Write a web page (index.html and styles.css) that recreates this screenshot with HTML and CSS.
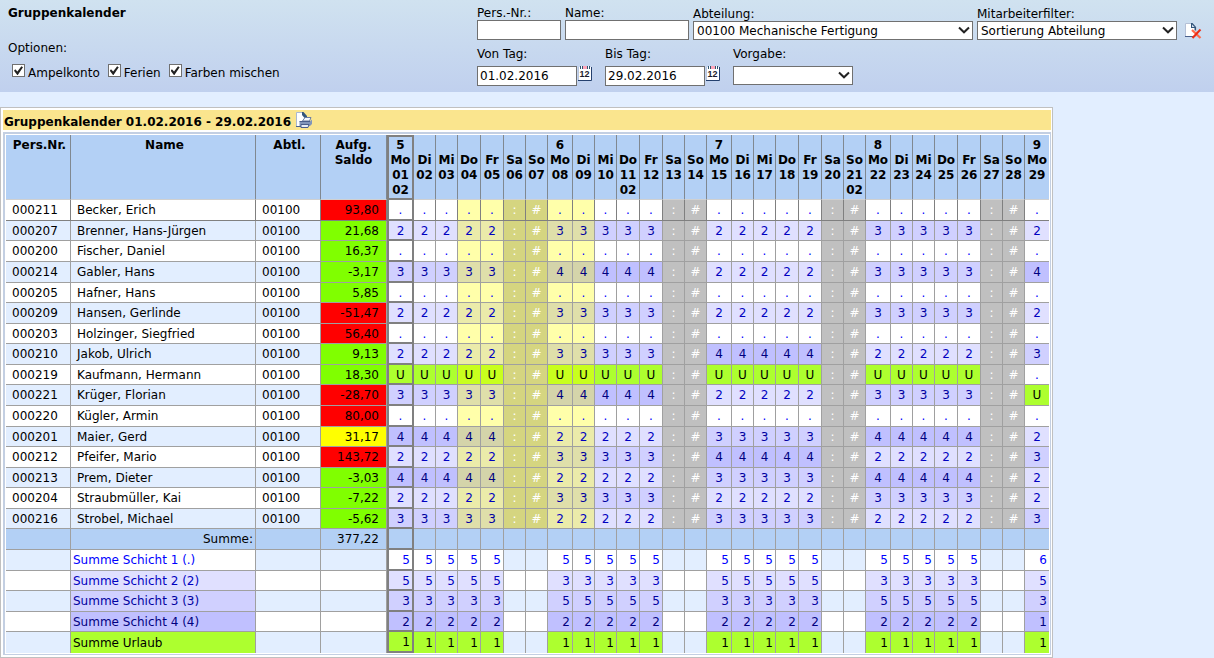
FILE: index.html
```html
<!DOCTYPE html>
<html lang="de">
<head>
<meta charset="utf-8">
<title>Gruppenkalender</title>
<link rel="stylesheet" href="styles.css">
</head>
<body>
<form class="toolbar">
  <div class="intro">
    <h1 class="heading">Gruppenkalender</h1>
    <fieldset class="options">
      <legend>Optionen:</legend>
      <div class="checks">
        <label class="check"><input type="checkbox" checked><span>Ampelkonto</span></label>
        <label class="check"><input type="checkbox" checked><span>Ferien</span></label>
        <label class="check"><input type="checkbox" checked><span>Farben mischen</span></label>
      </div>
    </fieldset>
  </div>
  <div class="fields">
    <div class="field-row">
      <div class="field w-nr"><label for="nr">Pers.-Nr.:</label><input id="nr" type="text"></div>
      <div class="field w-name"><label for="name">Name:</label><input id="name" type="text"></div>
      <div class="field w-dept"><label for="dept">Abteilung:</label>
        <div class="select"><select id="dept"><option>00100 Mechanische Fertigung</option></select><svg class="arrow" viewBox="0 0 12 8"><path d="M1 1.5L6 6.3L11 1.5"/></svg></div></div>
      <div class="field w-filter"><label for="filter">Mitarbeiterfilter:</label>
        <div class="select"><select id="filter"><option>Sortierung Abteilung</option></select><svg class="arrow" viewBox="0 0 12 8"><path d="M1 1.5L6 6.3L11 1.5"/></svg></div></div>
      <button type="reset" class="icon-button reset" aria-label="Filter löschen">
        <svg width="17" height="17" viewBox="0 0 17 17"><path d="M.5.5h6.500l4 4v9H.5z" fill="#fff" stroke="#b4c0d6"/><path d="M0 13.500h8" stroke="#4a608c"/><path d="M6 0h1.500L11 4v3.500H9.500V5H6z" fill="#34567c"/><path d="M7 1.500L9.500 4H7z" fill="#d5e2f3"/><path d="M7 7l8.500 8" stroke="#ff6a4a" stroke-width="2.200"/><path d="M15.500 6.500L7.500 15" stroke="#ec2c14" stroke-width="2"/></svg>
      </button>
    </div>
    <div class="field-row dates">
      <div class="field w-date"><label for="from">Von Tag:</label><div class="date"><input id="from" type="text" value="01.02.2016">
        <button type="button" class="icon-button" aria-label="Kalender"><svg class="cal" width="15" height="16" viewBox="0 0 15 16"><path d="M0 1h13v13H0z" fill="#fff"/><path d="M.5 1v13" stroke="#b9c6de"/><path d="M4 0h6v3H4z" fill="#ffa6bb"/><path d="M13.500 1v13.500H0" fill="none" stroke="#24406e"/><path d="M2.500 0v3M4.500 0v3M9.500 0v3M11.500 0v3" stroke="#2c5570"/><path d="M3.500 0v3M10.500 0v3" stroke="#fff"/><text x="6.500" y="11">12</text></svg></button></div></div>
      <div class="field w-date"><label for="to">Bis Tag:</label><div class="date"><input id="to" type="text" value="29.02.2016">
        <button type="button" class="icon-button" aria-label="Kalender"><svg class="cal" width="15" height="16" viewBox="0 0 15 16"><path d="M0 1h13v13H0z" fill="#fff"/><path d="M.5 1v13" stroke="#b9c6de"/><path d="M4 0h6v3H4z" fill="#ffa6bb"/><path d="M13.500 1v13.500H0" fill="none" stroke="#24406e"/><path d="M2.500 0v3M4.500 0v3M9.500 0v3M11.500 0v3" stroke="#2c5570"/><path d="M3.500 0v3M10.500 0v3" stroke="#fff"/><text x="6.500" y="11">12</text></svg></button></div></div>
      <div class="field w-preset"><label for="preset">Vorgabe:</label>
        <div class="select"><select id="preset"><option></option></select><svg class="arrow" viewBox="0 0 12 8"><path d="M1 1.5L6 6.3L11 1.5"/></svg></div></div>
    </div>
  </div>
</form>
<main class="panel">
  <h2 class="panel-title">Gruppenkalender 01.02.2016 - 29.02.2016
    <button type="button" class="icon-button" aria-label="Drucken"><svg width="17" height="17" viewBox="0 0 17 17"><path d="M1.500.5h6l3 3v11h-9z" fill="#fff" stroke="#a9b8d2"/><path d="M1 14.500h6" stroke="#4a608c"/><path d="M7 0h1.500L12 4v2H9.500L7 3z" fill="#34567c"/><path d="M7.500 9L10 5.500h6L14.500 9z" fill="#f4f7fc" stroke="#6a7da3"/><path d="M4.500 9.500H15l2-2v4.500l-2 2H4.500z" fill="#8195ba"/><path d="M4.500 9.500H15" stroke="#4b5f8c"/><path d="M6 12.500h8l-1 3H6z" fill="#e6edf8" stroke="#4b5f8c"/></svg></button>
  </h2>
  <div class="frame">
    <table class="calendar">
      <thead><tr id="days"><th class="c-nr">Pers.Nr.</th><th class="c-name">Name</th><th class="c-dept">Abtl.</th><th class="c-saldo">Aufg.<br>Saldo</th></tr></thead>
      <tbody id="rows"></tbody>
    </table>
  </div>
</main>
<script src="calendar.js"></script>
</body>
</html>
```
FILE: styles.css
```css
* { box-sizing: border-box; }
body, input, select, button { font-family: "DejaVu Sans", Verdana, sans-serif; font-size: 12px; color: #000; }
body { margin: 0; background: #e2eeff; line-height: 15px; }
h1, h2 { margin: 0; font-size: 12px; }

.toolbar { display: flex; min-height: 92px; background: linear-gradient(#d0e2f0, #c0d0ee); }
.intro { flex: 0 0 477px; padding: 6px 8px; }
.options { margin: 20px 0 0; padding: 0; border: 0; }
.options legend { padding: 0; }
.checks { display: flex; gap: 8px; padding: 8px 4px 0; }
.check { display: flex; gap: 3px; }
.check span { padding-top: 2px; }
.check input { appearance: none; width: 13px; height: 13px; margin: 0; border: 1px solid #707070; background: #fff; }
.check input:checked::after { content: ""; display: block; width: 9px; height: 9px; margin: 1px; background: #222; clip-path: polygon(0 52%, 14% 36%, 38% 60%, 82% 2%, 100% 14%, 42% 100%, 36% 100%); }

.fields { padding-top: 6px; line-height: 14px; }
.field-row { display: flex; gap: 4px; align-items: flex-end; }
.field { display: flex; flex-direction: column; }
.field input, .field select { width: 100%; border: 1px solid #707070; border-radius: 0; background: #fff; margin: 0; }
.field input { height: 20px; padding: 0 2px; }
.field select { display: block; appearance: none; height: 19px; padding: 0 3px; }
.select { position: relative; }
.arrow { position: absolute; right: 3px; top: 5px; width: 12px; height: 8px; fill: none; stroke: #222; stroke-width: 2; pointer-events: none; }
.w-nr { width: 84px; }
.w-name { width: 124px; }
.w-dept { width: 280px; }
.w-filter { width: 200px; }
.w-date { width: 124px; }
.w-preset { width: 120px; }
.dates { margin-top: 7px; align-items: flex-start; }
.dates label { padding-bottom: 5px; }
.date { display: flex; align-items: flex-start; gap: 1px; }
.date input { width: 100px; }
.cal text { font: bold 9px "Liberation Sans", sans-serif; text-anchor: middle; fill: #1a1a2a; }
.icon-button { display: block; padding: 0; border: 0; background: none; line-height: 0; }
.reset { margin-left: 4px; }

.panel { width: fit-content; margin-top: 15px; padding: 2px 1px 2px 2px; border: 1px solid #c0c0c0; background: #fff; }
.panel-title { display: flex; gap: 4px; height: 20px; padding: 1px 1px 0; line-height: 23px; background: #fae58e; }
.frame { margin-top: 2px; padding: 1px; border: 1px solid #c3cfe2; border-width: 2px 1px 1px 2px; }

.calendar { table-layout: fixed; border-collapse: separate; border-spacing: 0; width: 1043px; }
.calendar th { height: 65px; padding: 3px 0 0; vertical-align: top; font-weight: bold; border-right: 1px solid #808890; border-bottom: 1px solid #d0d0d0; background: #b3d0f5; }
.calendar .c-nr, .calendar .c-name, .calendar .c-dept { padding-left: 3px; }
.calendar td { height: 21px; padding: 0; line-height: 16px; text-align: center; white-space: nowrap; border-right: 1px solid #a0a0a0; border-bottom: 1px solid #a0a0a0; }
.calendar tr > :last-child { border-right: 0; }
tbody tr:nth-child(7n+2) td, tbody tr:nth-child(7n+5) td, tbody tr:nth-child(7n) td { height: 20px; }
tbody tr:first-child td { border-color: #808080; }
tbody tr:last-child td { border-bottom: 0; }
tbody tr { background: #fff; }
tbody tr:nth-child(even) { background: #e2eeff; }
tbody tr.total { background: #b3d0f5; }
.c-nr, .c-dept { width: 65px; }
.c-name { width: 185px; }
.c-saldo { width: 66px; }
.d-first { width: 27px; }
.d-last { width: 24px; }
.d-mo { width: 25px; }
.d-short { width: 22px; }
.d-long { width: 23px; }
.calendar td.left { padding-left: 6px; text-align: left; }
.calendar td.label { padding-left: 2px; text-align: left; }
.calendar td.sum { padding-right: 2px; text-align: right; }
.calendar td.saldo { padding-right: 7px; text-align: right; }
.calendar .today { border: 2px solid #808080; border-top: 0; }
.calendar td.today { padding-top: 1px; }
.calendar th.today { border-top: 2px solid #808080; padding-top: 1px; }
.calendar tr:last-child td.today { border-bottom: 2px solid #808080; }

.green { background: #80ff00; }
.red { background: #ff0000; }
.yellow { background: #ffff00; }
.s1 { background: #fff; color: #0000ff; }
.s2 { background: #e0e0ff; color: #0000c0; }
.s3 { background: #d0d0ff; color: #0000a0; }
.s4 { background: #c0c0ff; color: #000080; }
.su { background: #adff2f; color: #000; }
.we { background: #c0c0c0; color: #fff; }
.holiday.s1 { background: #ffffaa; }
.holiday.s2 { background: #ebebaa; }
.holiday.s3 { background: #dfdfaa; }
.holiday.s4 { background: #d4d4aa; }
.holiday.su { background: #c8ff1e; }
.holiday.we { background: #d5d580; }
```
FILE: calendar.js
```js
const weekdays = ["Mo", "Di", "Mi", "Do", "Fr", "Sa", "So"];
const widths = ["d-mo", "d-short", "d-short", "d-long", "d-long", "d-short", "d-short"];
const days = Array.from({ length: 29 }, (_, i) => i + 1);
const isWeekend = d => (d - 1) % 7 > 4;
const isHoliday = d => d >= 4 && d <= 9;

// One shift code per calendar week: 1 to 4 are shifts, U is leave.
const people = [
  ["000211", "Becker, Erich", "93,80", "red", "11111"],
  ["000207", "Brenner, Hans-Jürgen", "21,68", "green", "23232"],
  ["000200", "Fischer, Daniel", "16,37", "green", "11111"],
  ["000214", "Gabler, Hans", "-3,17", "green", "34234"],
  ["000205", "Hafner, Hans", "5,85", "green", "11111"],
  ["000209", "Hansen, Gerlinde", "-51,47", "red", "23232"],
  ["000203", "Holzinger, Siegfried", "56,40", "red", "11111"],
  ["000210", "Jakob, Ulrich", "9,13", "green", "23423"],
  ["000219", "Kaufmann, Hermann", "18,30", "green", "UUUU1"],
  ["000221", "Krüger, Florian", "-28,70", "red", "3423U"],
  ["000220", "Kügler, Armin", "80,00", "red", "11111"],
  ["000201", "Maier, Gerd", "31,17", "yellow", "42342"],
  ["000212", "Pfeifer, Mario", "143,72", "red", "23423"],
  ["000213", "Prem, Dieter", "-3,03", "green", "42342"],
  ["000204", "Straubmüller, Kai", "-7,22", "green", "23232"],
  ["000216", "Strobel, Michael", "-5,62", "green", "32323"]
];
const sums = [
  ["Summe Schicht 1 (.)", "s1", "55556"],
  ["Summe Schicht 2 (2)", "s2", "53535"],
  ["Summe Schicht 3 (3)", "s3", "35353"],
  ["Summe Schicht 4 (4)", "s4", "22221"],
  ["Summe Urlaub", "su", "11111"]
];

const cell = (cls, text = "") => `<td class="${cls}">${text}</td>`;
const week = d => Math.floor((d - 1) / 7);
const today = d => (d === 1 ? " today" : "");

document.getElementById("days").insertAdjacentHTML("beforeend", days.map(d => {
  const w = (d - 1) % 7;
  const width = d === 1 ? "d-first today" : d === 29 ? "d-last" : widths[w];
  const month = [1, 11, 21].includes(d) ? "<br>02" : "";
  const number = w === 0 ? 5 + week(d) : "&nbsp;";
  return `<th class="${width}">${number}<br>${weekdays[w]}<br>${String(d).padStart(2, "0")}${month}</th>`;
}).join(""));

const personRows = people.map(([nr, name, saldo, light, shifts]) =>
  "<tr>" + cell("left", nr) + cell("left", name) + cell("left", "00100") + cell("saldo " + light, saldo) +
  days.map(d => {
    const holiday = isHoliday(d) ? " holiday" : "";
    if (isWeekend(d)) return cell("we" + holiday, d % 7 === 6 ? ":" : "#");
    const code = shifts[week(d)];
    return cell("s" + code.toLowerCase() + holiday + today(d), code === "1" ? "." : code);
  }).join("") + "</tr>");

const totalRow = '<tr class="total">' + cell("") + cell("sum", "Summe:") + cell("") + cell("saldo", "377,22") +
  days.map(d => cell(today(d))).join("") + "</tr>";

const sumRows = sums.map(([label, cls, counts]) =>
  "<tr>" + cell("") + cell("label " + cls, label) + cell("") + cell("") +
  days.map(d => isWeekend(d) ? cell("") : cell("sum " + cls + today(d), counts[week(d)])).join("") + "</tr>");

document.getElementById("rows").innerHTML = [...personRows, totalRow, ...sumRows].join("");
```
